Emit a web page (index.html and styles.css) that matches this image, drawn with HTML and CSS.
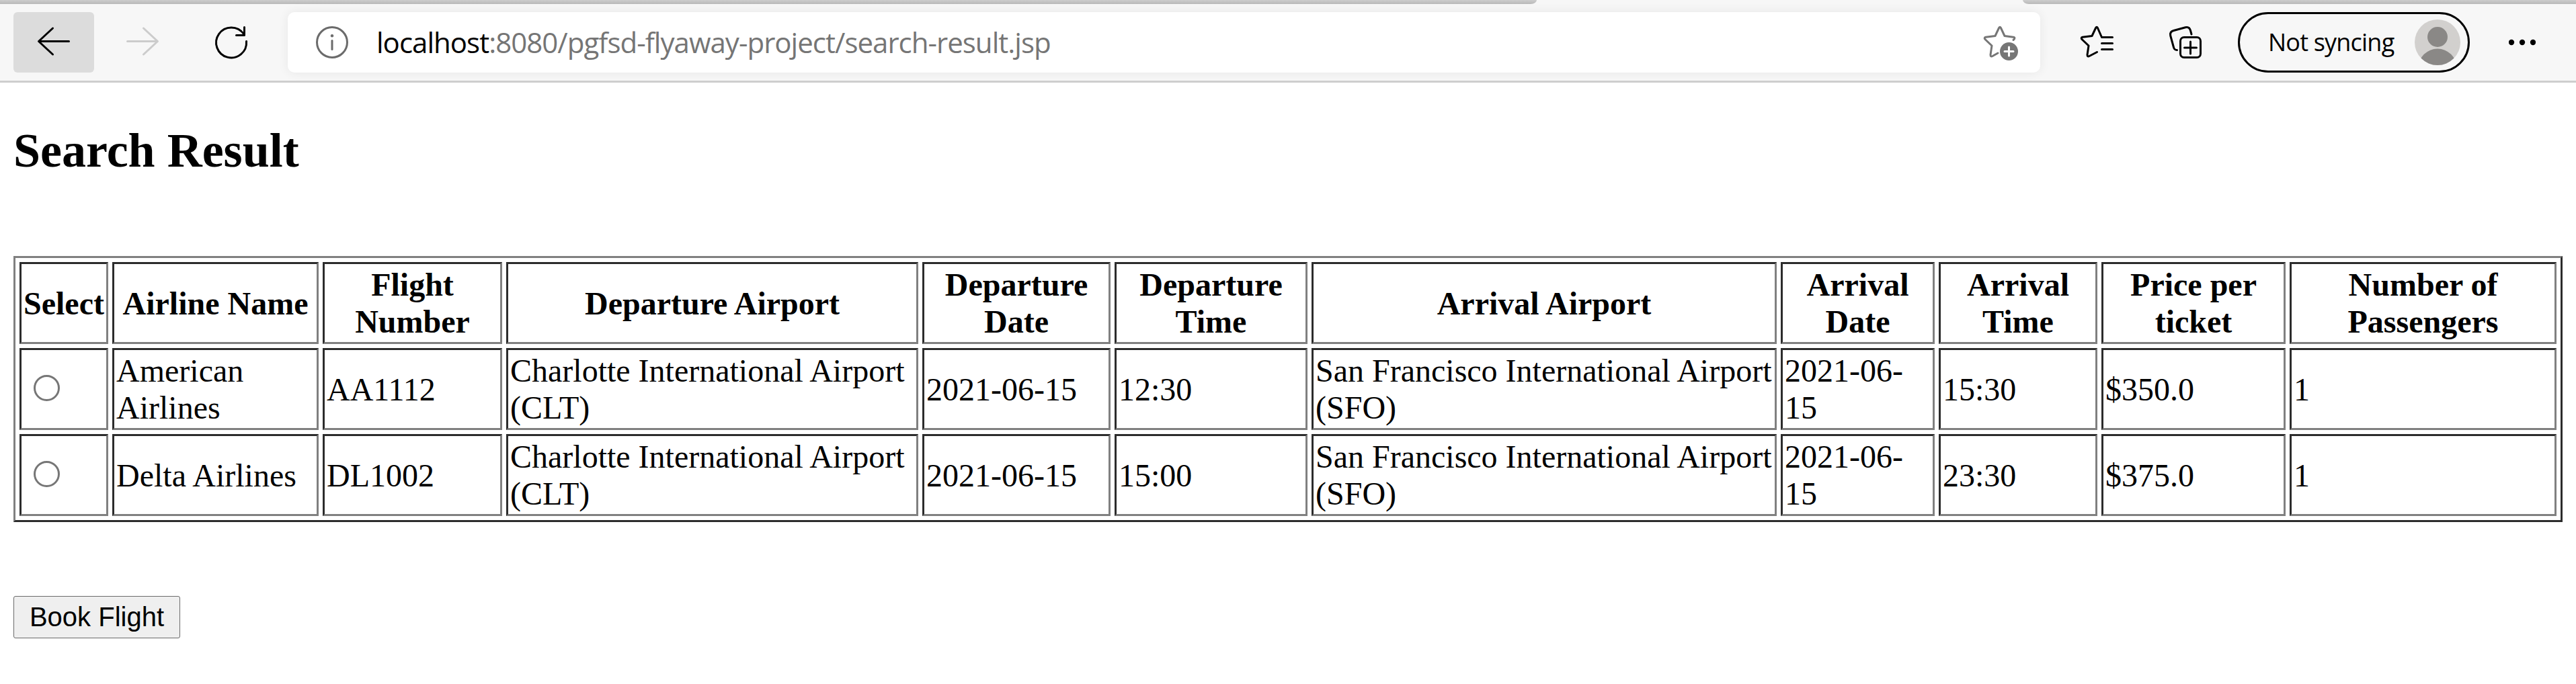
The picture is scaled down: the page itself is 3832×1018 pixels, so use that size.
FILE: index.html
```html
<!DOCTYPE html>
<html lang="en">
<head>
<meta charset="utf-8">
<title>Search Result</title>
<link rel="stylesheet" href="styles.css">
</head>
<body>
<header class="browser">
  <div class="tabs"><span class="tab-left"></span><span class="tab-right"></span></div>
  <nav class="toolbar">
    <span class="nav-button back"><svg width="54" height="54" viewBox="0 0 54 54"><path d="M49.500 25.500H5M25.500 6 4.500 25.500 25.500 45" /></svg></span>
    <span class="nav-button forward"><svg width="54" height="54" viewBox="0 0 54 54"><path d="M4.500 25.500H49M28.500 6 49.500 25.500 28.500 45" /></svg></span>
    <span class="nav-button reload"><svg width="54" height="54" viewBox="0 0 54 54"><path d="M49.500 25.500A22.500 22.500 0 1 1 45.500 14.500M46.500 4.500V16.500H34.500" /></svg></span>
    <div class="address">
      <svg class="info" width="54" height="54" viewBox="0 0 54 54"><circle cx="27" cy="27" r="22.500"/><path d="M27 24.500V37.500"/><circle class="dot" cx="27" cy="17.200" r="2.200"/></svg>
      <span class="url"><span class="host">localhost</span>:8080/pgfsd-flyaway-project/search-result.jsp</span>
      <svg class="favorite" width="54" height="54" viewBox="0 0 54 54"><path d="M47 23.500C49.500 21.500 49.500 19.500 47 19.200L34 17.500 28.400 5.500Q27 3 25.600 5.500L20 17.500 6 19.200Q3 20 5 22.500L15 32 13 45.500Q13 49 16 47.500L24 43"/><circle class="badge" cx="40.500" cy="40.500" r="13.500"/><path class="plus" d="M40.500 34V47M34 40.500H47"/></svg>
    </div>
    <svg class="favorites-list" width="54" height="54" viewBox="0 0 54 54"><path d="M50.500 19.500H34.500L28.400 5.500Q27 3 25.600 5.500L20 17.500 6 19.200Q3 20 5 22.500L15 32 13 45.500Q13 49 16 47.500L27.500 41.500M34.500 28.500H50.500M34.500 37.500H50.500"/></svg>
    <svg class="collections" width="54" height="54" viewBox="0 0 54 54"><path d="M36 15 34.500 9.500Q33 3.500 27 4.800L9.500 9.500Q3.500 11 4.700 17L9.500 34.500Q10.500 38.500 14.500 38.500"/><rect x="19.500" y="19.500" width="30" height="30" rx="5.500"/><path d="M34.500 26V44M25.500 35H43.500"/></svg>
    <div class="profile"><span class="sync">Not syncing</span>
      <svg width="68" height="68" viewBox="0 0 68 68"><defs><clipPath id="avatar"><circle cx="34" cy="34" r="34"/></clipPath></defs><g clip-path="url(#avatar)"><rect width="68" height="68" fill="#d2d0ce"/><circle cx="34" cy="26" r="15" fill="#8a8886"/><circle cx="34" cy="72" r="28.500" fill="#8a8886"/></g></svg>
    </div>
    <svg class="more" width="40" height="10" viewBox="0 0 40 10"><circle cx="4" cy="5" r="4.200"/><circle cx="20" cy="5" r="4.200"/><circle cx="36" cy="5" r="4.200"/></svg>
  </nav>
</header>
<main class="page">
  <h2 class="title">Search Result</h2>
  <form>
    <table class="flights">
      <colgroup><col class="select"><col class="airline"><col class="number"><col class="from"><col class="dep-date"><col class="dep-time"><col class="to"><col class="arr-date"><col class="arr-time"><col class="price"><col class="passengers"></colgroup>
      <tr><th>Select</th><th>Airline Name</th><th>Flight Number</th><th>Departure Airport</th><th>Departure Date</th><th>Departure Time</th><th>Arrival Airport</th><th>Arrival Date</th><th>Arrival Time</th><th>Price per ticket</th><th>Number of Passengers</th></tr>
      <tr><td><input class="choice" type="radio" name="flight"></td><td>American Airlines</td><td>AA1112</td><td>Charlotte International Airport (CLT)</td><td>2021-06-15</td><td>12:30</td><td>San Francisco International Airport (SFO)</td><td>2021-06-<wbr>15</td><td>15:30</td><td>$350.0</td><td>1</td></tr>
      <tr><td><input class="choice" type="radio" name="flight"></td><td>Delta Airlines</td><td>DL1002</td><td>Charlotte International Airport (CLT)</td><td>2021-06-15</td><td>15:00</td><td>San Francisco International Airport (SFO)</td><td>2021-06-<wbr>15</td><td>23:30</td><td>$375.0</td><td>1</td></tr>
    </table>
    <button class="book" type="button">Book Flight</button>
  </form>
</main>
</body>
</html>
```
FILE: styles.css
```css
body {
  margin: 0;
  background: #fff;
  color: #000;
  font: 48px/55px "Liberation Serif", "Times New Roman", serif;
  overflow: hidden;
}

.browser {
  height: 123px;
  box-sizing: border-box;
  background: #f7f7f7;
  border-bottom: 3px solid #cecece;
}

.tabs {
  display: flex;
  justify-content: space-between;
  height: 6px;
}

.tab-left,
.tab-right {
  background: linear-gradient(#cdcdcd, #b8b8b8);
}

.tab-left {
  width: 2286px;
  border-bottom-right-radius: 9px 6px;
}

.tab-right {
  width: 823px;
  border-bottom-left-radius: 9px 6px;
}

.toolbar {
  display: flex;
  align-items: center;
  height: 114px;
  padding-left: 20px;
}

.toolbar svg {
  flex: none;
  fill: none;
  stroke: #000;
  stroke-width: 3;
  stroke-linecap: round;
  stroke-linejoin: round;
}

.nav-button {
  display: flex;
  flex: none;
  align-items: center;
  justify-content: center;
  width: 120px;
  height: 90px;
  margin-right: 12px;
  border-radius: 6px;
}

.nav-button.back {
  background: #dcdcdc;
}

.toolbar .forward svg {
  stroke: #ccc;
}

.nav-button.reload {
  margin-right: 24px;
}

.address {
  display: flex;
  flex: none;
  align-items: center;
  box-sizing: border-box;
  width: 2607px;
  height: 90px;
  padding: 0 33px 0 39px;
  border-radius: 10px;
  background: #fff;
  box-shadow: 0 0 16px rgba(0, 0, 0, .07);
}

.toolbar .info {
  stroke: #6b6b6b;
}

.toolbar .info .dot {
  fill: #6b6b6b;
  stroke: none;
}

.url {
  margin-left: 39px;
  color: #757575;
  font: 42px/60px "Open Sans", "Noto Sans", sans-serif;
  letter-spacing: -.98px;
  white-space: nowrap;
}

.host {
  color: #000;
}

.toolbar .favorite {
  margin-left: auto;
  stroke: #767676;
}

.toolbar .favorite .badge {
  fill: #767676;
  stroke: none;
}

.toolbar .favorite .plus {
  stroke: #fff;
}

.favorites-list {
  margin-left: 57px;
}

.collections {
  margin-left: 78px;
}

.profile {
  display: flex;
  flex: none;
  align-items: center;
  justify-content: space-between;
  box-sizing: border-box;
  width: 345px;
  height: 90px;
  margin-left: 51px;
  padding: 0 11px 0 42px;
  border: 3px solid #000;
  border-radius: 45px;
}

.sync {
  font: 36px/50px "Open Sans", "Noto Sans", sans-serif;
  letter-spacing: -.8px;
  white-space: nowrap;
}

.toolbar .profile svg {
  stroke: none;
}

.toolbar .more {
  margin-left: 58px;
  fill: #000;
  stroke: none;
}

.page {
  padding: 0 20px;
}

.title {
  margin: 60px 0 115px;
  font-size: 72px;
  line-height: 83px;
}

.flights {
  table-layout: fixed;
  width: 3792px;
  border: 3px solid;
  border-color: #808080 #2c2c2c #2c2c2c #808080;
  border-spacing: 6px;
}

.flights th,
.flights td {
  box-sizing: border-box;
  height: 122px;
  padding: 3px;
  border: 3px solid;
  border-color: #2c2c2c #808080 #808080 #2c2c2c;
}

.select { width: 132px; }
.airline { width: 307px; }
.number { width: 267px; }
.from { width: 613px; }
.dep-date { width: 280px; }
.dep-time { width: 287px; }
.to { width: 692px; }
.arr-date { width: 229px; }
.arr-time { width: 236px; }
.price { width: 274px; }
.passengers { width: 397px; }

.choice {
  display: block;
  appearance: none;
  box-sizing: border-box;
  width: 39px;
  height: 39px;
  margin: 0 0 3px 15px;
  border: 3px solid #767676;
  border-radius: 50%;
}

.book {
  display: block;
  box-sizing: border-box;
  width: 248px;
  height: 63px;
  margin-top: 110px;
  padding: 0 0 2px;
  border: 1px solid #6b6b6b;
  border-radius: 3px;
  background: #efefef;
  color: #000;
  font: 40px/58px "Liberation Sans", Arial, sans-serif;
}
```
